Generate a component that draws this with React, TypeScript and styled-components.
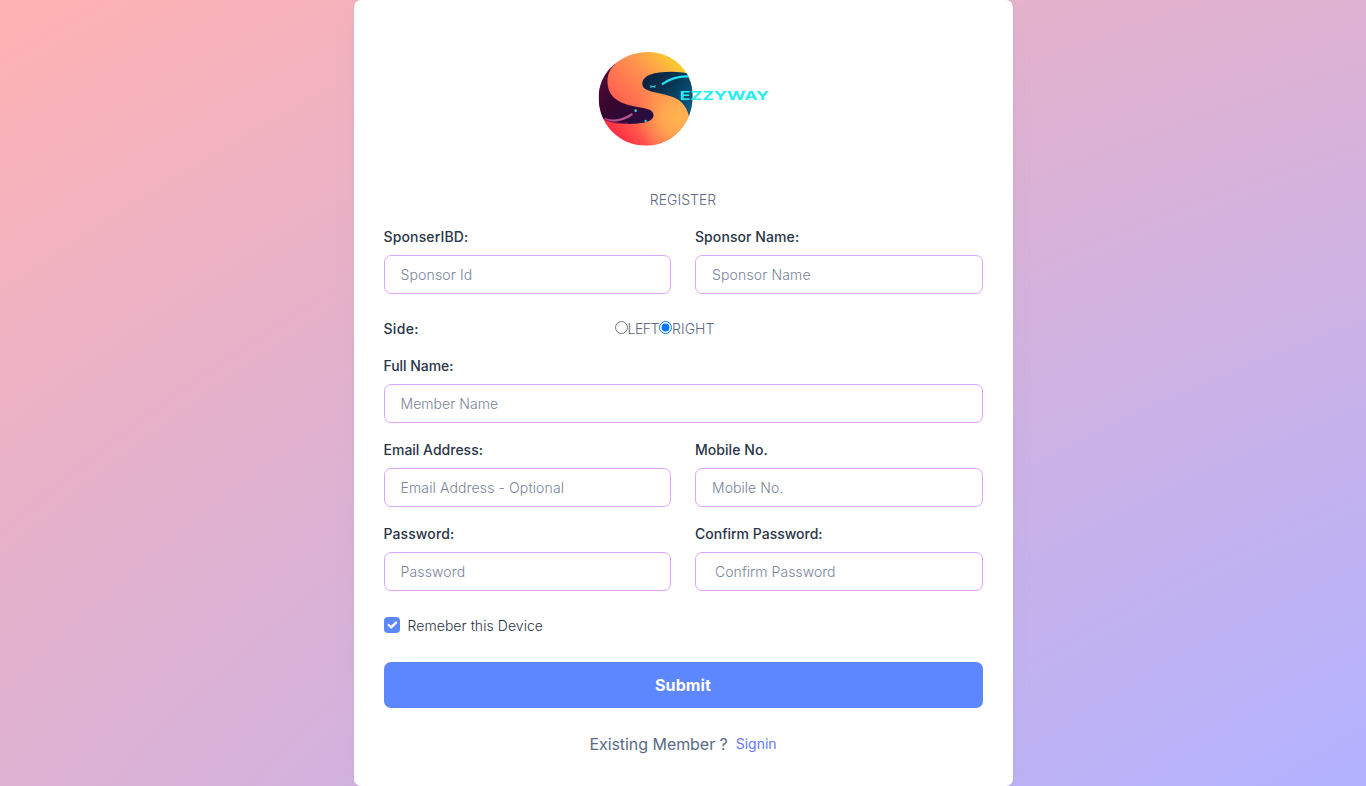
import React from "react";
import styled, { createGlobalStyle } from "styled-components";

const GlobalStyle = createGlobalStyle`
  *, *::before, *::after { box-sizing: border-box; }
  body {
    margin: 0;
    font-family: Inter, "Noto Sans", sans-serif;
    font-size: 14px;
    line-height: 21px;
    color: #5a6a85;
  }
`;

const Page = styled.main`
  height: 786px;
  overflow: hidden;
  display: flex;
  justify-content: center;
  background: radial-gradient(#b2b2ff 50%, #ffb2b2 100%) 0 0 / 400% 400%;
`;

const Card = styled.section`
  width: 659px;
  height: 786px;
  padding: 40px 30px 0;
  border-radius: 7px;
  background: #fff;
  box-shadow: 0 0 2px rgba(145, 158, 171, 0.3), 0 12px 24px -4px rgba(145, 158, 171, 0.12);
`;

const Logo = styled.svg`
  display: block;
  width: 187px;
  height: 115px;
  margin: 0 auto 34px 206.5px;
`;

const Text = styled.span<{ $track?: number }>`
  letter-spacing: ${(p) => p.$track ?? 0}px;
`;

const Title = styled.p`
  margin: 0 0 16px;
  text-align: center;
  font-weight: 300;
`;

const Form = styled.form`
  display: flex;
  flex-direction: column;
`;

const Row = styled.div<{ $columns?: number }>`
  display: grid;
  grid-template-columns: repeat(${(p) => p.$columns ?? 1}, 1fr);
  column-gap: 24px;
  margin-bottom: 16px;
`;

const Label = styled.label<{ $track?: number }>`
  display: block;
  margin-bottom: 8px;
  color: #2a3547;
  font-weight: 500;
  letter-spacing: ${(p) => p.$track ?? 0}px;
`;

const Input = styled.input<{ $track?: number; $indent?: number }>`
  display: block;
  width: 100%;
  height: 39px;
  padding: 8px 16px;
  border: 1px solid #dca6ff;
  border-radius: 7px;
  outline: none;
  background: transparent;
  font: inherit;
  font-weight: 300;
  color: #5a6a85;
  text-indent: ${(p) => p.$indent ?? 0}px;
  letter-spacing: ${(p) => p.$track ?? 0}px;
  &::placeholder { color: #78849a; opacity: 1; }
`;

const SideRow = styled.div`
  display: grid;
  grid-template-columns: 231px 1fr;
  align-items: center;
  height: 21px;
  margin: 8px 0 16px;
`;

const SideLabel = styled(Label)`
  margin: 0;
`;

const Choices = styled.div`
  display: flex;
  align-items: center;
  font-weight: 300;
`;

const Radio = styled.input`
  width: 13px;
  height: 13px;
  margin: -3px 0 0;
`;

const Remember = styled.label`
  display: flex;
  align-items: center;
  gap: 8px;
  height: 21px;
  margin: 8px 0 26px;
  color: #2a3547;
  font-weight: 300;
`;

const CheckBox = styled.span`
  display: flex;
  width: 16px;
  height: 16px;
  margin-top: -2px;
  border-radius: 4px;
  background: #5d87ff;
`;

const Submit = styled.button`
  height: 46px;
  border: 0;
  border-radius: 7px;
  background: #5d87ff;
  color: #fff;
  font: 700 16px/24px Inter, sans-serif;
`;

const Footer = styled.p`
  display: flex;
  justify-content: center;
  align-items: center;
  gap: 8px;
  margin: 24px 0 0;
  font-size: 16px;
  line-height: 24px;
`;

const Link = styled.a`
  font-size: 14px;
  color: #6478ff;
  text-decoration: none;
`;

type FieldProps = {
  id: string;
  label: string;
  hint: string;
  type?: string;
  labelTrack?: number;
  hintTrack?: number;
  indent?: number;
};

function Field({ id, label, hint, type = "text", labelTrack, hintTrack, indent }: FieldProps) {
  return (
    <div>
      <Label htmlFor={id} $track={labelTrack}>{label}</Label>
      <Input id={id} type={type} placeholder={hint} $track={hintTrack} $indent={indent} />
    </div>
  );
}

function BrandLogo() {
  return (
    <Logo viewBox="0 0 561 345" role="img" aria-label="Ezzyway">
      <defs>
        <linearGradient id="warm" x1="0.1" y1="0.85" x2="0.9" y2="0.15">
          <stop offset="0" stopColor="#ff1f3d" />
          <stop offset="0.3" stopColor="#ff6350" />
          <stop offset="0.65" stopColor="#ff9250" />
          <stop offset="1" stopColor="#f8d42c" />
        </linearGradient>
        <radialGradient id="amber" gradientUnits="userSpaceOnUse" cx="265" cy="235" r="125">
          <stop offset="0" stopColor="#ffb450" />
          <stop offset="0.4" stopColor="#ffac50" stopOpacity="0.85" />
          <stop offset="1" stopColor="#ff9c50" stopOpacity="0" />
        </radialGradient>
        <linearGradient id="plum" x1="0" y1="0" x2="1" y2="1">
          <stop offset="0" stopColor="#5b0b3c" />
          <stop offset="0.5" stopColor="#35052f" />
          <stop offset="1" stopColor="#251044" />
        </linearGradient>
        <linearGradient id="sea" x1="0" y1="0" x2="1" y2="0.6">
          <stop offset="0" stopColor="#101c3b" />
          <stop offset="0.5" stopColor="#083553" />
          <stop offset="1" stopColor="#075c8a" />
        </linearGradient>
        <clipPath id="disc">
          <path d="M175 36C250 36 308 94 308 168C308 250 248 317 167 317C88 317 26 255 26 172C26 96 94 36 175 36Z" />
        </clipPath>
      </defs>
      <g clipPath="url(#disc)">
        <rect x="20" y="30" width="300" height="300" fill="url(#warm)" />
        <rect x="20" y="30" width="300" height="300" fill="url(#amber)" />
        <path d="M78 70C45 95 45 148 72 173C101 199 142 198 172 207C192 213 197 229 182 240C155 257 80 254 43 240L15 215V90Z" fill="url(#plum)" />
        <path d="M310 105C276 93 214 92 180 104C160 111 151 130 161 143C175 157 215 158 250 172C276 183 294 203 299 241L322 225V105Z" fill="url(#sea)" />
        <path d="M43 237C72 247 101 240 127 222" fill="none" stroke="#b9538c" strokeWidth="7" />
        <path d="M38 235C65 250 91 251 113 249" fill="none" stroke="#9b174e" strokeWidth="3" />
        <path d="M216 133C241 115 269 106 306 110" fill="none" stroke="#22dff0" strokeWidth="7" />
      </g>
      <g fill="#38cbd7">
        <path d="M181 135l7 4 8-4v9l-8-3-7 3z" />
        <circle cx="137" cy="212" r="4" />
        <circle cx="167" cy="243" r="3.500" />
      </g>
      <text x="269" y="181" textLength="268" lengthAdjust="spacingAndGlyphs" fill="#27eeee" fontFamily="Inter, sans-serif" fontWeight="700" fontSize="37">EZZYWAY</text>
    </Logo>
  );
}

export default function App() {
  return (
    <>
      <GlobalStyle />
      <Page>
        <Card>
          <BrandLogo />
          <Title><Text>REGISTER</Text></Title>
          <Form>
            <Row $columns={2}>
              <Field id="sponsor-id" label="SponserIBD:" hint="Sponsor Id" labelTrack={0.15} hintTrack={0.15} />
              <Field id="sponsor-name" label="Sponsor Name:" hint="Sponsor Name" labelTrack={0.08} hintTrack={0.15} />
            </Row>
            <SideRow>
              <SideLabel as="span" $track={0.3}>Side:</SideLabel>
              <Choices>
                <Radio type="radio" name="side" aria-label="Left" />
                <Text $track={-0.45}>LEFT</Text>
                <Radio type="radio" name="side" aria-label="Right" defaultChecked />
                <Text>RIGHT</Text>
              </Choices>
            </SideRow>
            <Row>
              <Field id="name" label="Full Name:" hint="Member Name" labelTrack={-0.05} hintTrack={0.05} />
            </Row>
            <Row $columns={2}>
              <Field id="email" label="Email Address:" hint="Email Address - Optional" hintTrack={0.13} />
              <Field id="mobile" label="Mobile No." hint="Mobile No." labelTrack={0.05} hintTrack={0.05} />
            </Row>
            <Row $columns={2}>
              <Field id="password" type="password" label="Password:" hint="Password" labelTrack={0.1} hintTrack={0.15} />
              <Field id="confirm" type="password" label="Confirm Password:" hint="Confirm Password" hintTrack={0.05} indent={3} />
            </Row>
            <Remember>
              <CheckBox>
                <svg width="16" height="16" viewBox="0 0 20 20" fill="none" stroke="#fff" strokeWidth="3" strokeLinecap="round" strokeLinejoin="round">
                  <path d="M6 10l3 3 6-6" />
                </svg>
              </CheckBox>
              <Text $track={0.06}>Remeber this Device</Text>
            </Remember>
            <Submit type="button"><Text $track={0.1}>Submit</Text></Submit>
            <Footer>
              <Text $track={-0.05}>Existing Member ?</Text>
              <Link href="#signin">Signin</Link>
            </Footer>
          </Form>
        </Card>
      </Page>
    </>
  );
}
